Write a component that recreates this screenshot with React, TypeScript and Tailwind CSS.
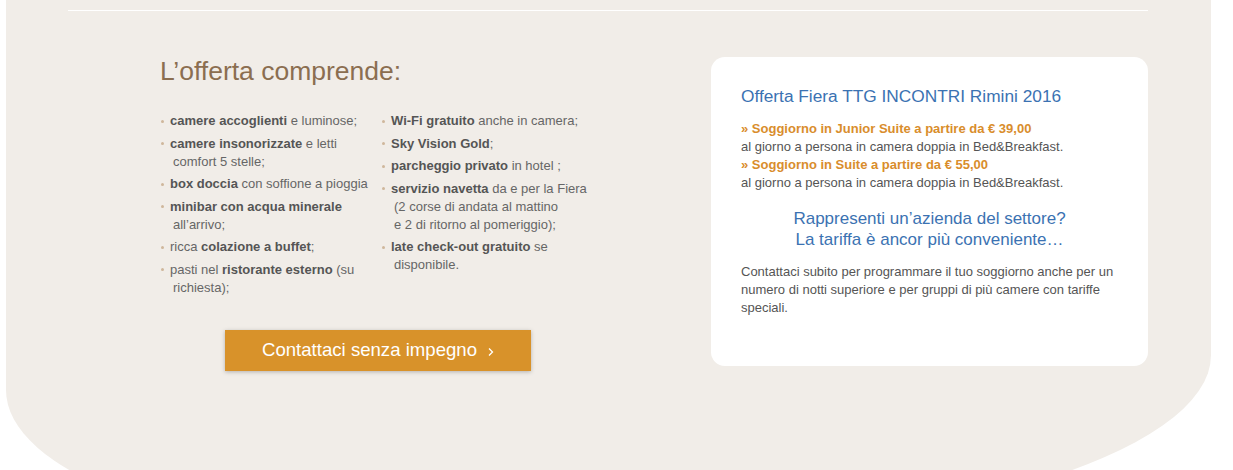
import React from "react";

type Item = { lines: React.ReactNode[] };

const leftItems: Item[] = [
  { lines: [<><b className="font-bold text-[#555]">camere accoglienti</b> e luminose;</>] },
  { lines: [<><b className="font-bold text-[#555]">camere insonorizzate</b> e letti</>, "comfort 5 stelle;"] },
  { lines: [<><b className="font-bold text-[#555]">box doccia</b> con soffione a pioggia</>] },
  { lines: [<b className="font-bold text-[#555]">minibar con acqua minerale</b>, "all’arrivo;"] },
  { lines: [<>ricca <b className="font-bold text-[#555]">colazione a buffet</b>;</>] },
  { lines: [<>pasti nel <b className="font-bold text-[#555]">ristorante esterno</b> (su</>, "richiesta);"] },
];

const rightItems: Item[] = [
  { lines: [<><b className="font-bold text-[#555]">Wi-Fi gratuito</b> anche in camera;</>] },
  { lines: [<><b className="font-bold text-[#555]">Sky Vision Gold</b>;</>] },
  { lines: [<><b className="font-bold text-[#555]">parcheggio privato</b> in hotel ;</>] },
  {
    lines: [
      <><b className="font-bold text-[#555]">servizio navetta</b> da e per la Fiera</>,
      "(2 corse di andata al mattino",
      "e 2 di ritorno al pomeriggio);",
    ],
  },
  { lines: [<><b className="font-bold text-[#555]">late check-out gratuito</b> se</>, "disponibile."] },
];

const BulletList: React.FC<{ items: Item[]; className?: string }> = ({ items, className }) => (
  <ul className={className}>
    {items.map((item, i) => (
      <li key={i} className="flex mb-[4.6px]">
        <span className="w-[10px] h-[18px] flex items-center shrink-0">
          <span className="ml-[1px] w-[3px] h-[3px] rounded-full bg-[#cfb79c]" />
        </span>
        <div>
          {item.lines.map((line, j) => (
            <div key={j} className={j === 0 ? "whitespace-nowrap" : "pl-[3px] whitespace-nowrap"}>
              {line}
            </div>
          ))}
        </div>
      </li>
    ))}
  </ul>
);

export default function App() {
  return (
    <div className="w-full h-[470px] overflow-hidden bg-white font-['Liberation_Sans',Arial,sans-serif]">
      <div className="ml-[6px] w-[1205px] h-[540px] bg-[#f1ede8] rounded-bl-[410px_150px] rounded-br-[640px_185px] pt-[10px]">
        <div className="ml-[62px] w-[1080px] border-t border-white">
          <div className="flex pt-[45px]">
            {/* left column */}
            <div className="w-[643px] pl-[92px]">
              <div className="w-[436px]">
                <h2 className="text-[26.5px] leading-[31px] text-[#8b6e50]">L’offerta comprende:</h2>
                <div className="flex mt-[25px] text-[13px] leading-[18px] text-[#666]">
                  <BulletList items={leftItems} className="w-[221px]" />
                  <BulletList items={rightItems} />
                </div>
                <div className="flex justify-center mt-[28px]">
                  <button className="w-[306px] h-[41px] bg-[#d8922a] text-white text-[18.6px] flex items-center justify-center gap-[11px] shadow-[0_1px_4px_rgba(0,0,0,0.25)]">
                    <span>Contattaci senza impegno</span>
                    <svg width="6" height="10" viewBox="0 0 6 10" fill="none" className="mt-[3px]">
                      <path d="M1 1.5 L4.5 5 L1 8.5" stroke="white" strokeWidth="1.3" />
                    </svg>
                  </button>
                </div>
              </div>
            </div>

            {/* right card */}
            <div className="w-[437px] h-[309px] bg-white rounded-[14px] mt-[1px] px-[30px] pt-[28px]">
              <h3 className="text-[17.3px] leading-[22px] text-[#3b72b2]">Offerta Fiera TTG INCONTRI Rimini 2016</h3>
              <div className="mt-[13px] text-[13px] leading-[18px] text-[#555]">
                <p className="font-bold text-[#d98d2c]">» Soggiorno in Junior Suite a partire da € 39,00</p>
                <p>al giorno a persona in camera doppia in Bed&amp;Breakfast.</p>
                <p className="font-bold text-[#d98d2c]">» Soggiorno in Suite a partire da € 55,00</p>
                <p>al giorno a persona in camera doppia in Bed&amp;Breakfast.</p>
              </div>
              <div className="mt-[16px] text-center text-[17px] leading-[21px] text-[#3b72b2]">
                <p>Rappresenti un’azienda del settore?</p>
                <p>La tariffa è ancor più conveniente…</p>
              </div>
              <p className="mt-[13px] text-[13px] leading-[18px] text-[#555]">
                Contattaci subito per programmare il tuo soggiorno anche per un numero di notti superiore e per gruppi di più camere con tariffe speciali.
              </p>
            </div>
          </div>
        </div>
      </div>
    </div>
  );
}
